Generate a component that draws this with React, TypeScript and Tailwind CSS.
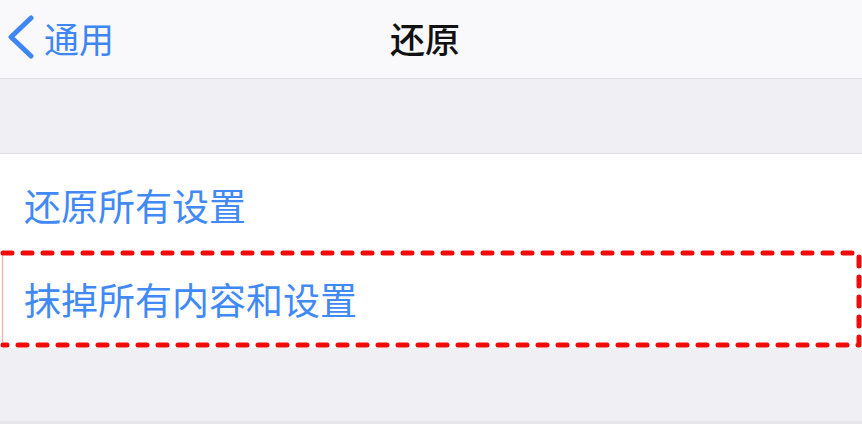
const font = { fontFamily: '"Noto Sans CJK SC", "Noto Sans", sans-serif' };

function BackChevron() {
  return (
    <svg width="30" height="44" viewBox="0 0 30 44" className="shrink-0">
      <path d="M25 3 L5 22 L25 41" fill="none" stroke="#3d86f7" strokeWidth="5" strokeLinecap="round" strokeLinejoin="round" />
    </svg>
  );
}

function DashedFrame() {
  // annotation drawn over the second row
  return (
    <svg className="absolute inset-0 w-full h-full pointer-events-none" viewBox="0 0 862 98" preserveAspectRatio="none">
      <line x1="2.5" y1="3" x2="2.5" y2="95" stroke="#f7b5b5" strokeWidth="1.5" />
      <path d="M3 3 H859 V95 H3" fill="none" stroke="#f20a0a" strokeWidth="5" strokeDasharray="9 11" strokeLinecap="round" strokeLinejoin="round" />
    </svg>
  );
}

export default function App() {
  return (
    <div className="w-[862px] h-[424px] overflow-hidden bg-[#efeff4] flex flex-col" style={font}>
      {/* Nav bar */}
      <div className="h-[79px] shrink-0 bg-[#f9f9fb] border-b border-[#dcdce1] grid grid-cols-[1fr_auto_1fr] items-center">
        <div className="flex items-center gap-[8px] pl-[6px] pb-[4px]">
          <BackChevron />
          <span className="text-[35px] leading-none text-[#3d86f7]">通用</span>
        </div>
        <span className="text-[35px] leading-none font-medium text-[#111111] -translate-x-[6px] pb-[4px]">还原</span>
        <div />
      </div>

      {/* Spacer */}
      <div className="h-[75px] shrink-0 border-b border-[#dedee3]" />

      {/* List */}
      <div className="bg-white flex flex-col">
        <div className="h-[96px] flex items-center pl-[24px]">
          <span className="text-[37px] leading-none text-[#4189f7] pt-[6px]">还原所有设置</span>
        </div>
        <div className="relative h-[98px] flex items-center pl-[24px]">
          <span className="text-[37px] leading-none text-[#4189f7]">抹掉所有内容和设置</span>
          <DashedFrame />
        </div>
      </div>

      <div className="flex-1" />
      <div className="h-[3px] shrink-0 bg-[#e6e6eb]" />
    </div>
  );
}
